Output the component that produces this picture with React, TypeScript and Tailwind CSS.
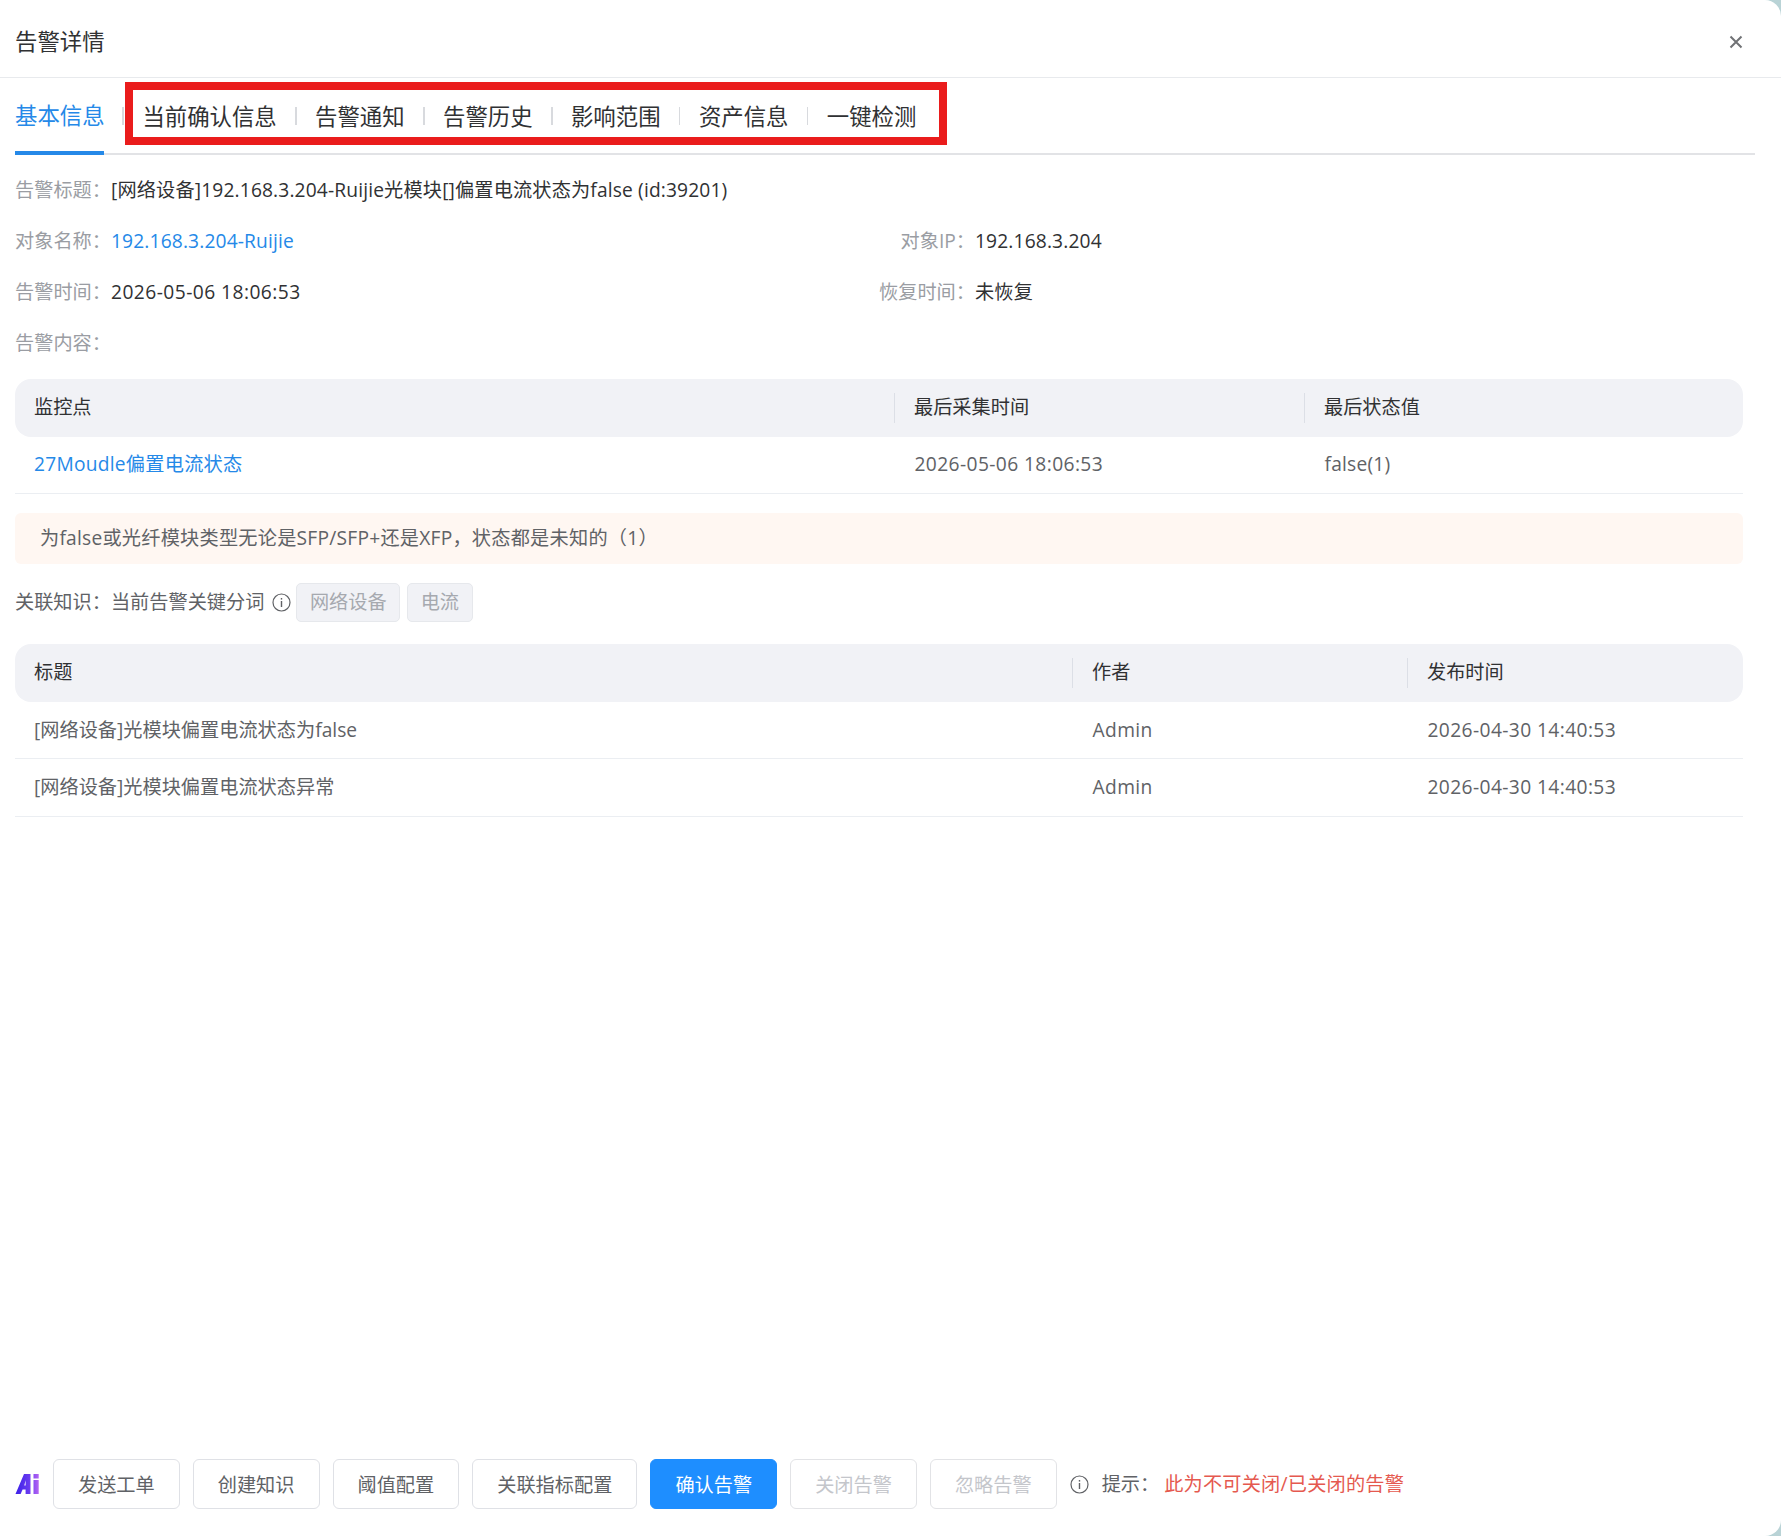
const FONT = "font-['Open_Sans','Noto_Sans_CJK_SC',sans-serif]";

const TABS = ["基本信息", "当前确认信息", "告警通知", "告警历史", "影响范围", "资产信息", "一键检测"];

function InfoIcon() {
  return (
    <svg width="19" height="19" viewBox="0 0 19 19" fill="none" stroke="currentColor" className="shrink-0">
      <circle cx="9.5" cy="9.5" r="8.5" strokeWidth="1.2" />
      <path d="M9.5 8v6" strokeWidth="1.4" />
      <path d="M9.5 5v1.6" strokeWidth="1.4" />
    </svg>
  );
}

function AiLogo() {
  return (
    <svg width="26" height="22" viewBox="0 0 26 22" className="shrink-0 -mr-[1px]">
      <defs>
        <linearGradient id="ai-grad" x1="0" y1="0" x2="1" y2="0">
          <stop offset="0" stopColor="#3b20e8" />
          <stop offset="0.6" stopColor="#6a3cf0" />
          <stop offset="1" stopColor="#b565f2" />
        </linearGradient>
      </defs>
      <path
        d="M9 1h6.5v20H10.6v-4.5H7.6L5.6 21H0.5zM10.6 7.2 9.3 12.6h1.3zM18.5 7h5.2v14h-5.2zM18.5 1h5.2v4.4h-5.2z"
        fill="url(#ai-grad)"
        fillRule="evenodd"
      />
    </svg>
  );
}

function Field({ label, children }: { label: string; children?: React.ReactNode }) {
  return (
    <div className="flex items-center h-[51px]">
      <span className="w-[96px] shrink-0 text-right whitespace-nowrap text-[#9a9da3]">{label}：</span>
      <span className="text-[#303133] tracking-[0.15px]">{children}</span>
    </div>
  );
}

function TableHead({ cols }: { cols: { title: string; width: string }[] }) {
  return (
    <div className="flex items-center h-[57.5px] rounded-[16px] bg-[#f1f2f6] text-[#303133]">
      {cols.map((c, i) => (
        <div key={c.title} className={`${c.width} flex items-center h-[30px] pl-[19px] ${i > 0 ? "border-l-[1.5px] border-[#dcdfe6]" : ""}`}>
          {c.title}
        </div>
      ))}
    </div>
  );
}

function Button({ children, variant }: { children: React.ReactNode; variant?: "primary" | "disabled" }) {
  let cls = "border border-[#dfe1e6] bg-white text-[#606266]";
  if (variant === "primary") cls = "border border-[#1e8eff] bg-[#1e8eff] text-white";
  if (variant === "disabled") cls = "border border-[#e2e3e6] bg-white text-[#c4c6cb]";
  return (
    <button className={`h-[50px] pt-[2px] px-[24px] rounded-[6px] leading-none ${cls}`}>{children}</button>
  );
}

export default function App() {
  return (
    <div className={`w-[1781px] h-[1536px] bg-[#b9d3d6] ${FONT} text-[19.2px]`}>
      <div className="relative flex flex-col w-full h-full bg-white rounded-r-[16px]">
        <div className="flex items-center justify-between h-[78px] pt-[7px] pl-[15px] pr-[38px] border-b-[1.5px] border-[#e8eaed]">
          <span className="text-[22.4px] text-[#303133]">告警详情</span>
          <svg width="14" height="14" viewBox="0 0 14 14" stroke="#707275" strokeWidth="2">
            <path d="M1.5 1.5l11 11M12.5 1.5l-11 11" />
          </svg>
        </div>

        <div className="flex items-center h-[77px] ml-[15px] w-[1740px] border-b-2 border-[#e2e3e6] text-[22.4px] text-[#303133]">
          {TABS.map((t, i) => (
            <div key={t} className="flex items-center h-full">
              {i > 0 && <span className="w-[1.5px] h-[18px] mx-[18.45px] bg-[#d8dade]" />}
              <span
                className={`flex items-center h-[77px] pt-[2px] whitespace-nowrap ${
                  i === 0 ? "w-[89px] text-[#2589e8] border-b-4 border-[#2589e8] translate-y-[1px]" : ""
                }`}
              >
                {t}
              </span>
            </div>
          ))}
        </div>

        <div className="flex flex-col pl-[15px] pr-[38px] pt-[10px]">
          <Field label="告警标题">
            [网络设备]192.168.3.204-Ruijie光模块[]偏置电流状态为false (id:39201)
          </Field>
          <div className="grid grid-cols-[864px_1fr]">
            <Field label="对象名称">
              <span className="text-[#2589e8]">192.168.3.204-Ruijie</span>
            </Field>
            <Field label="对象IP">192.168.3.204</Field>
            <Field label="告警时间">
              <span className="tracking-[0.45px]">2026-05-06 18:06:53</span>
            </Field>
            <Field label="恢复时间">未恢复</Field>
          </div>
          <Field label="告警内容" />

          <div className="mt-[10px]">
            <TableHead
              cols={[
                { title: "监控点", width: "w-[879px]" },
                { title: "最后采集时间", width: "w-[410px]" },
                { title: "最后状态值", width: "flex-1" },
              ]}
            />
            <div className="flex items-center h-[57px] border-b-[1.5px] border-[#ebeef2] text-[#606266]">
              <div className="w-[879px] pl-[19px] text-[#2589e8] tracking-[0.25px]">27Moudle偏置电流状态</div>
              <div className="w-[410px] pl-[20.5px] tracking-[0.4px]">2026-05-06 18:06:53</div>
              <div className="flex-1 pl-[20.5px] tracking-[0.2px]">false(1)</div>
            </div>
          </div>

          <div className="flex items-center h-[51px] mt-[19.5px] pl-[25px] rounded-[6px] bg-[#fff7f2] text-[#606266] tracking-[0.23px]">
            为false或光纤模块类型无论是SFP/SFP+还是XFP，状态都是未知的（1）
          </div>

          <div className="flex items-center h-[39px] mt-[19px] text-[#606266]">
            <span>关联知识：当前告警关键分词</span>
            <span className="ml-[8px]"><InfoIcon /></span>
            <span className="flex items-center h-[39px] ml-[5px] px-[12.5px] rounded-[5px] border border-[#e6e8ec] bg-[#f1f2f6] text-[#a6a9af]">网络设备</span>
            <span className="flex items-center h-[39px] ml-[7px] px-[12.5px] rounded-[5px] border border-[#e6e8ec] bg-[#f1f2f6] text-[#a6a9af]">电流</span>
          </div>

          <div className="mt-[22px]">
            <TableHead
              cols={[
                { title: "标题", width: "w-[1057px]" },
                { title: "作者", width: "w-[335px]" },
                { title: "发布时间", width: "flex-1" },
              ]}
            />
            {[
              "[网络设备]光模块偏置电流状态为false",
              "[网络设备]光模块偏置电流状态异常",
            ].map((t) => (
              <div key={t} className="flex items-center h-[57.5px] pt-[1px] border-b-[1.5px] border-[#ebeef2] text-[#606266]">
                <div className="w-[1057px] pl-[19px]">{t}</div>
                <div className="w-[335px] pl-[20.5px] tracking-[0.4px]">Admin</div>
                <div className="flex-1 pl-[20.5px] tracking-[0.4px]">2026-04-30 14:40:53</div>
              </div>
            ))}
          </div>
        </div>

        <div className="mt-auto mb-[27px] flex items-center gap-[13px] pl-[15px] h-[50px]">
          <AiLogo />
          <Button>发送工单</Button>
          <Button>创建知识</Button>
          <Button>阈值配置</Button>
          <Button>关联指标配置</Button>
          <Button variant="primary">确认告警</Button>
          <Button variant="disabled">关闭告警</Button>
          <Button variant="disabled">忽略告警</Button>
          <span className="text-[#606266]"><InfoIcon /></span>
          <span className="flex items-center gap-[5px] pt-[1px]">
            <span className="text-[#606266]">提示：</span>
            <span className="text-[#e5594f] tracking-[0.2px]">此为不可关闭/已关闭的告警</span>
          </span>
        </div>

        <div className="absolute left-[125px] top-[82px] w-[822px] h-[63px] border-[8px] border-[#ea1c1c]" />
      </div>
    </div>
  );
}
